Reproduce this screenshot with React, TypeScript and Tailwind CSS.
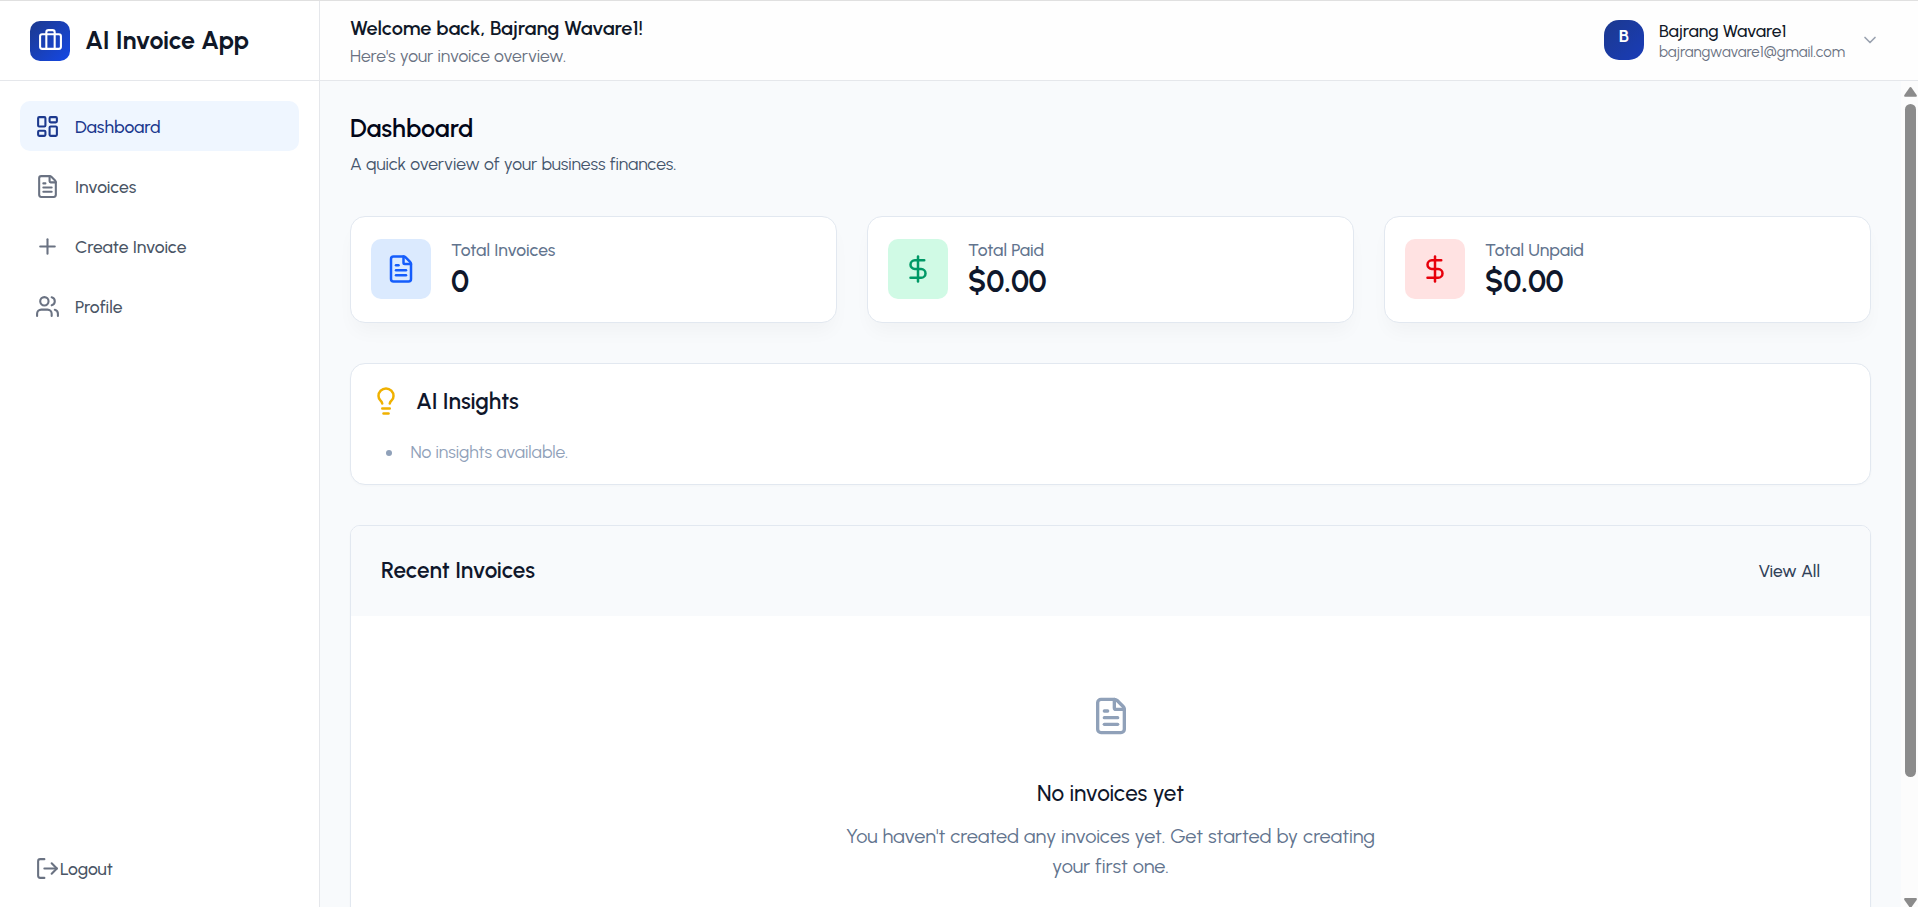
import type { ReactNode } from "react";
import {
  Briefcase,
  ChevronDown,
  DollarSign,
  FileText,
  LayoutDashboard,
  Lightbulb,
  LogOut,
  Plus,
  Users,
  type LucideIcon,
} from "lucide-react";

const navItems: { label: string; icon: LucideIcon; active?: boolean }[] = [
  { label: "Dashboard", icon: LayoutDashboard, active: true },
  { label: "Invoices", icon: FileText },
  { label: "Create Invoice", icon: Plus },
  { label: "Profile", icon: Users },
];

const stats: { label: string; value: string; icon: LucideIcon; tone: string }[] = [
  { label: "Total Invoices", value: "0", icon: FileText, tone: "bg-blue-100 text-blue-600" },
  { label: "Total Paid", value: "$0.00", icon: DollarSign, tone: "bg-emerald-100 text-emerald-600" },
  { label: "Total Unpaid", value: "$0.00", icon: DollarSign, tone: "bg-red-100 text-red-600" },
];

function Sidebar() {
  return (
    <aside className="flex w-[320px] shrink-0 flex-col border-r border-gray-200 bg-white">
      <div className="flex h-[80px] shrink-0 items-center gap-[15px] border-b border-gray-200 px-[30px] pt-px">
        <div className="flex size-[40px] justify-center rounded-[10px] bg-gradient-to-br from-blue-900 to-blue-700 pt-[7px]">
          <Briefcase className="size-[25px] text-white" />
        </div>
        <span className="pb-[2px] text-[25px] leading-[34px] font-bold text-gray-900">AI Invoice App</span>
      </div>
      <nav className="flex flex-1 flex-col gap-[10px] p-[20px]">
        {navItems.map(({ label, icon: Icon, active }) => (
          <button
            key={label}
            className={`flex h-[50px] items-center gap-[15px] rounded-[10px] px-[15px] pt-px text-[17.5px] leading-[25px] font-medium ${
              active ? "bg-blue-50 text-blue-900" : "text-gray-600"
            }`}
          >
            <Icon className={`size-[25px] ${active ? "text-blue-900" : "text-gray-500"}`} />
            {label}
          </button>
        ))}
      </nav>
      <div className="px-[20px] pb-[13px]">
        <button className="flex h-[50px] w-full items-center px-[15px] pb-px text-[17.5px] leading-[25px] font-medium text-gray-600">
          <LogOut className="size-[25px] text-gray-500" />
          Logout
        </button>
      </div>
    </aside>
  );
}

function Header() {
  return (
    <header className="flex h-[80px] shrink-0 items-center justify-between border-b border-gray-200 bg-[#fefefe] pr-[38px] pl-[30px]">
      <div className="flex flex-col">
        <h1 className="text-[20px] leading-[30px] font-semibold text-gray-900">Welcome back, Bajrang Wavare1!</h1>
        <p className="text-[17.5px] leading-[25px] text-gray-500">Here's your invoice overview.</p>
      </div>
      <div className="flex items-center gap-[15px]">
        <div className="-mt-px flex size-[40px] justify-center rounded-[15px] bg-gradient-to-br from-blue-900 to-blue-800 pt-[3px]">
          <span className="text-[17.5px] leading-[25px] font-bold text-white">B</span>
        </div>
        <div className="flex flex-col">
          <p className="text-[17.5px] leading-[23px] font-medium text-gray-900">Bajrang Wavare1</p>
          <p className="text-[15px] leading-[20px] text-gray-500">bajrangwavare1@gmail.com</p>
        </div>
        <ChevronDown className="-mt-px size-[20px] text-gray-400" />
      </div>
    </header>
  );
}

function Card({ className, children }: { className: string; children: ReactNode }) {
  return <section className={`border border-slate-200 bg-white ${className}`}>{children}</section>;
}

function ScrollRail() {
  return (
    <div className="flex w-[17px] shrink-0 flex-col items-center bg-[#fcfcfc] pt-[6px] pl-[2px]">
      <svg className="h-[10px] w-[13px] shrink-0" viewBox="0 0 13 10" fill="#8b8b8b">
        <path d="M5.4 .7a1.4 1.4 0 0 1 2.2 0l5 7.2c.6 .9 .1 1.9 -.9 1.9H1.3c-1 0 -1.5 -1 -.9 -1.9z" />
      </svg>
      <div className="mt-[7px] h-[673px] w-[11px] shrink-0 rounded-full bg-[#8b8b8b]" />
      <div className="flex-1" />
      <svg className="h-[9px] w-[13px] shrink-0" viewBox="0 0 13 9" fill="#8b8b8b">
        <path d="M1.3 0h10.4c1 0 1.5 1 .9 1.9L7.6 9H5.4L.4 1.9C-.2 1 .3 0 1.3 0z" />
      </svg>
    </div>
  );
}

function Dashboard() {
  return (
    <main className="flex min-w-0 flex-1 flex-col overflow-hidden p-[30px]">
      <h2 className="text-[25px] leading-[34px] font-semibold text-slate-950">Dashboard</h2>
      <p className="mt-[6px] text-[17.5px] leading-[25px] text-slate-600">A quick overview of your business finances.</p>

      <div className="mt-[40px] grid shrink-0 grid-cols-3 gap-[30px]">
        {stats.map(({ label, value, icon: Icon, tone }) => (
          <Card
            key={label}
            className="flex h-[107px] items-center rounded-[15px] px-[20px] shadow-[0_12px_19px_-4px_rgba(0,0,0,0.035)]"
          >
            <div className={`-mt-px flex size-[60px] items-center justify-center rounded-[10px] ${tone}`}>
              <Icon className="size-[30px]" />
            </div>
            <div className="ml-[20px] flex flex-col">
              <span className="text-[17.5px] leading-[25px] font-medium text-slate-500">{label}</span>
              <span className="text-[30px] leading-[40px] font-bold text-slate-900">{value}</span>
            </div>
          </Card>
        ))}
      </div>

      <Card className="mt-[40px] h-[122px] shrink-0 rounded-[15px] px-[20px] pt-[20px] shadow-[0_1px_3px_rgba(0,0,0,0.025)]">
        <div className="flex items-start">
          <Lightbulb className="mt-[2px] size-[30px] text-yellow-500" />
          <h3 className="ml-[15px] text-[22.5px] leading-[35px] font-semibold text-slate-900">AI Insights</h3>
        </div>
        <div className="mt-[20px] flex items-center pl-[15px] text-slate-400">
          <span className="mt-[3px] size-[6px] rounded-full bg-slate-400" />
          <p className="ml-[18.5px] text-[17.5px] leading-[25px]">No insights available.</p>
        </div>
      </Card>

      <Card className="mt-[40px] h-[500px] shrink-0 overflow-hidden rounded-[10px] shadow-[0_1px_3px_rgba(0,0,0,0.025)]">
        <div className="flex h-[90px] items-center justify-between bg-slate-50 pr-[50px] pb-px pl-[30px]">
          <h3 className="text-[22.5px] leading-[35px] font-semibold text-slate-900">Recent Invoices</h3>
          <button className="text-[17.5px] leading-[25px] font-medium text-slate-700">View All</button>
        </div>
        <div className="flex flex-col items-center pt-[80px] text-center">
          <FileText className="size-[40px] text-slate-400" />
          <h4 className="mt-[40px] text-[22.5px] leading-[35px] font-medium text-slate-900">No invoices yet</h4>
          <p className="mt-[10px] w-[560px] text-[20px] leading-[30px] text-slate-500">
            You haven't created any invoices yet. Get started by creating your first one.
          </p>
        </div>
      </Card>
    </main>
  );
}

export default function App() {
  return (
    <div className="flex h-screen flex-col overflow-hidden border-t border-[#e0e0e0] bg-slate-50 font-[Urbanist,Lato,sans-serif]">
      <div className="flex min-h-0 flex-1">
        <Sidebar />
        <div className="flex min-w-0 flex-1 flex-col">
          <Header />
          <div className="flex min-h-0 flex-1">
            <Dashboard />
            <ScrollRail />
          </div>
        </div>
      </div>
    </div>
  );
}
